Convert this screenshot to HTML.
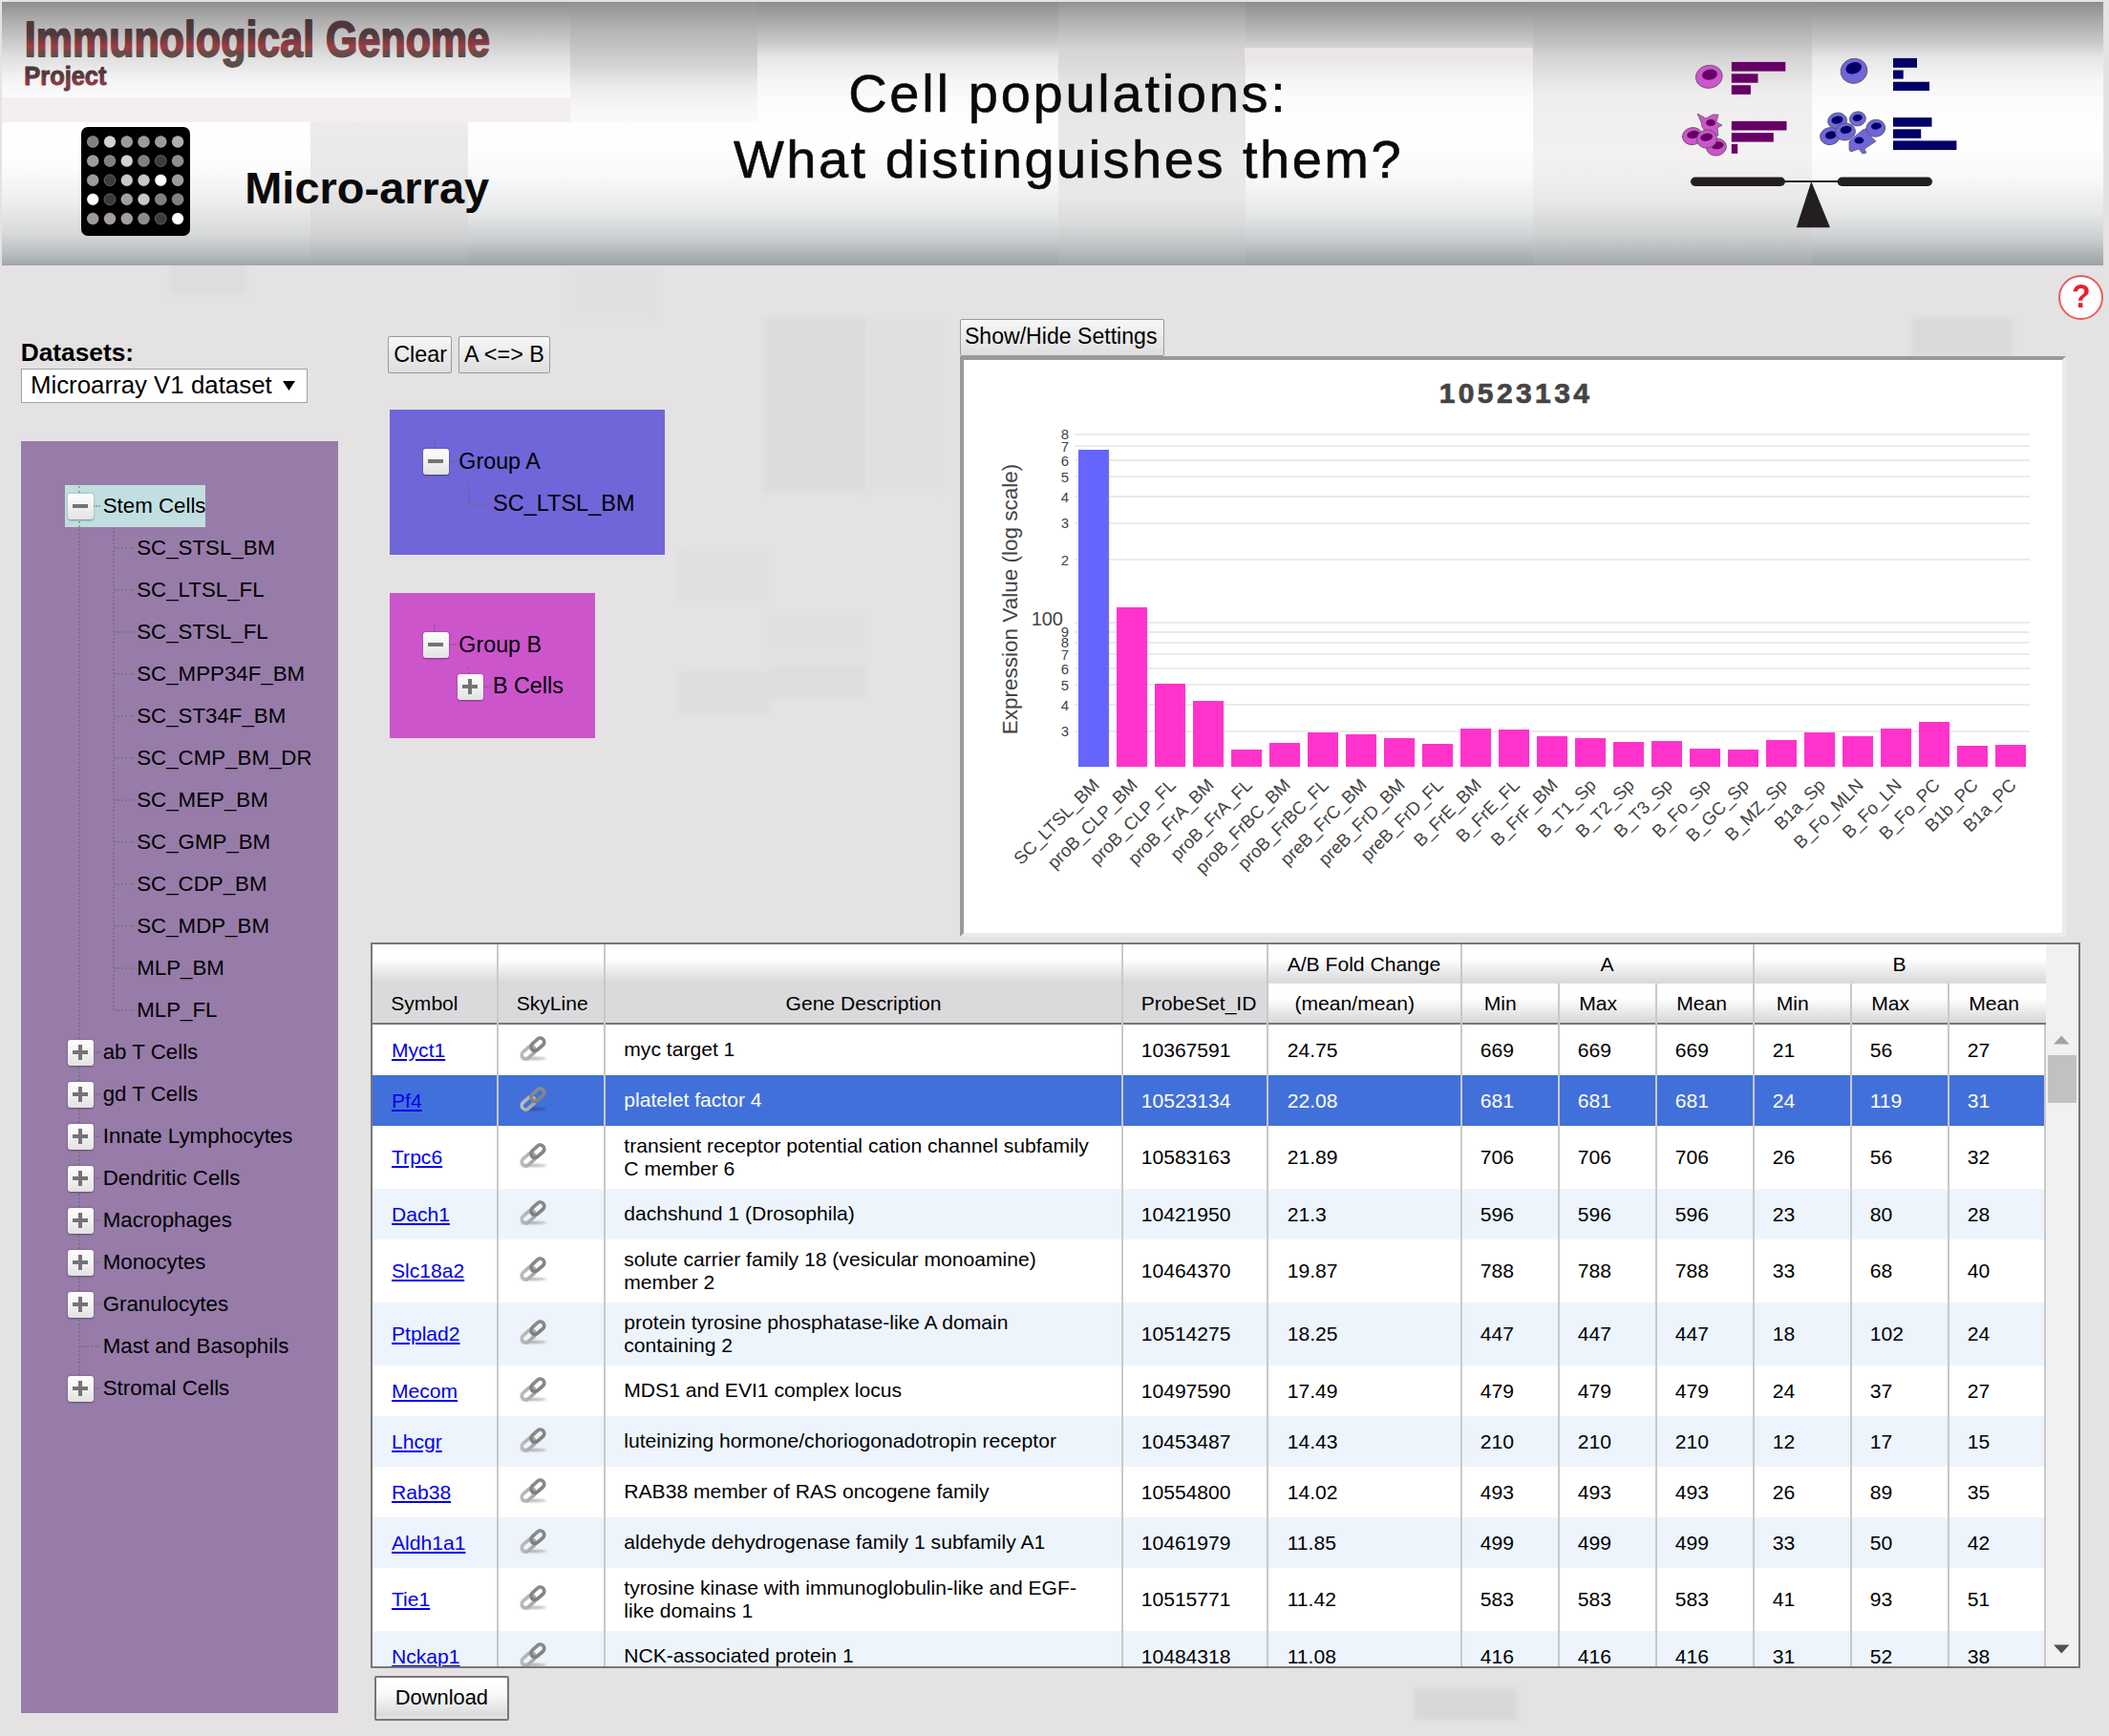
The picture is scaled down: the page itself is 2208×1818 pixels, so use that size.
<!DOCTYPE html>
<html><head><meta charset="utf-8">
<style>
*{box-sizing:border-box}
html,body{margin:0;padding:0}
body{width:2208px;height:1818px;position:relative;overflow:hidden;background:#e4e2e3;font-family:"Liberation Sans",sans-serif;color:#000}
.t{position:absolute;white-space:pre;line-height:1.117}
.abs{position:absolute}
.btn{position:absolute;border:1px solid #9a9a9a;border-radius:2px;background:linear-gradient(#f7f7f7,#dedede)}
.tog{position:absolute;width:27px;height:27px;border-radius:3px;background:linear-gradient(#fdfdfd 0%,#f3f3f3 45%,#e2e2e2 100%);box-shadow:0 0.5px 2px rgba(0,0,0,.4)}
.tog i{position:absolute;left:5.5px;top:11.5px;width:16px;height:4px;background:#747474}
.tog b{position:absolute;left:11.5px;top:5.5px;width:4px;height:16px;background:#747474}
.vd{position:absolute;width:0;border-left:2px dotted rgba(100,100,100,.45)}
.hd{position:absolute;height:0;border-top:2px dotted rgba(100,100,100,.45)}
</style></head><body>

<div class="abs" style="left:177px;top:278px;width:82px;height:30px;background:#dedddd;filter:blur(2px)"></div>
<div class="abs" style="left:597px;top:286px;width:94px;height:47px;background:#e1dfdf;filter:blur(2px)"></div>
<div class="abs" style="left:800px;top:333px;width:107px;height:182px;background:#dddcdc;filter:blur(2px)"></div>
<div class="abs" style="left:907px;top:333px;width:80px;height:182px;background:#e1e0e0;filter:blur(2px)"></div>
<div class="abs" style="left:710px;top:577px;width:94px;height:50px;background:#e0dfdf;filter:blur(2px)"></div>
<div class="abs" style="left:2001px;top:333px;width:107px;height:40px;background:#dbdada;filter:blur(2px)"></div>
<div class="abs" style="left:1481px;top:1768px;width:107px;height:34px;background:#d9d8d8;filter:blur(2px)"></div>
<div class="abs" style="left:710px;top:704px;width:94px;height:44px;background:#dfdede;filter:blur(2px)"></div>
<div class="abs" style="left:804px;top:644px;width:103px;height:40px;background:#e1e0e0;filter:blur(2px)"></div>
<div class="abs" style="left:804px;top:696px;width:103px;height:35px;background:#dfdede;filter:blur(2px)"></div>
<div class="abs" style="left:2px;top:2px;width:2200px;height:276px;overflow:hidden;background:linear-gradient(#8e8e8e 0%,#a9a9a9 7%,#c8c8c8 15%,#e6e6e6 21%,#f6f6f6 30%,#fdfdfd 40%,#ffffff 55%,#f6f7f7 68%,#e6e8e9 80%,#cbced0 90%,#a9aeb0 97%,#9da3a5 100%)">
<div class="abs" style="left:0;top:0;width:595px;height:100px;background:linear-gradient(#8f8f8f 0%,#b5b5b5 25%,#dcdcdc 55%,#f3f3f3 80%,#fbfbfb 100%)"></div>
<div class="abs" style="left:0;top:100px;width:595px;height:26px;background:#f3efef"></div>
<div class="abs" style="left:0;top:126px;width:323px;height:150px;background:linear-gradient(#ffffff 0%,#fdfdfd 30%,#eeeeee 55%,#d6d8d9 78%,#b9bdbf 92%,#a0a6a8 100%)"></div>
<div class="abs" style="left:323px;top:126px;width:165px;height:150px;background:linear-gradient(#ececec 0%,#e8e8e8 40%,#e0e0e0 60%,#cfd1d2 80%,#b5b9bb 92%,#9fa5a7 100%)"></div>
<div class="abs" style="left:1603px;top:0;width:292px;height:276px;background:linear-gradient(#8f8f8f 0%,#b0b0b0 10%,#d8d6d6 22%,#efedee 35%,#f3f1f2 60%,#e9e9ea 75%,#cfd1d2 88%,#a3a8aa 100%)"></div>
<div class="abs" style="left:595px;top:0;width:196px;height:126px;background:linear-gradient(#929292 0%,#b0b0b0 20%,#c6c6c6 40%,#d3d3d3 52%,#ebebeb 70%,#f7f7f7 88%,#fafafa 100%)"></div>
<div class="abs" style="left:1106px;top:0;width:196px;height:276px;background:linear-gradient(#959393 0%,#b7b5b4 8%,#d5d3d3 18%,#e3e1e1 30%,#e8e7e7 45%,#eaeaea 60%,#e7e8e8 74%,#d7d9da 85%,#bfc2c4 93%,#a0a5a7 100%)"></div>
<div class="abs" style="left:1301px;top:48px;width:302px;height:14px;background:#ebe6e6"></div>
</div>
<svg class="abs" style="left:0;top:0" width="720" height="110"><defs><linearGradient id="g1" gradientUnits="userSpaceOnUse" x1="0" y1="-38" x2="0" y2="1"><stop offset="0" stop-color="#4a3639"/><stop offset="0.38" stop-color="#52393c"/><stop offset="0.72" stop-color="#9e3d44"/><stop offset="0.86" stop-color="#6b4a48"/><stop offset="1" stop-color="#5b4f49"/></linearGradient><linearGradient id="g2" gradientUnits="userSpaceOnUse" x1="0" y1="-21.2" x2="0" y2="9.8"><stop offset="0" stop-color="#4a3639"/><stop offset="0.35" stop-color="#56393d"/><stop offset="0.62" stop-color="#8d3a41"/><stop offset="1" stop-color="#5a3a3e"/></linearGradient></defs><text transform="translate(25.8,59.4) scale(0.843,1)" font-family="Liberation Sans" font-weight="bold" font-size="51" fill="url(#g1)" stroke="url(#g1)" stroke-width="1.8" stroke-linejoin="round">Immunological Genome</text><text transform="translate(25.3,89.2) scale(0.918,1)" font-family="Liberation Sans" font-weight="bold" font-size="27.7" fill="url(#g2)" stroke="url(#g2)" stroke-width="1" stroke-linejoin="round">Project</text></svg>
<div class="abs" style="left:85px;top:133px;width:114px;height:114px;background:#000;border-radius:7px"></div>
<svg class="abs" style="left:0;top:0" width="260" height="260"><circle cx="97.2" cy="148.4" r="6" fill="rgb(128,128,128)" stroke="rgba(255,255,255,0.35)" stroke-width="0.8"/><circle cx="115.0" cy="148.4" r="6" fill="rgb(210,210,210)" stroke="rgba(255,255,255,0.35)" stroke-width="0.8"/><circle cx="132.8" cy="148.4" r="6" fill="rgb(155,155,155)" stroke="rgba(255,255,255,0.35)" stroke-width="0.8"/><circle cx="150.5" cy="148.4" r="6" fill="rgb(155,155,155)" stroke="rgba(255,255,255,0.35)" stroke-width="0.8"/><circle cx="168.3" cy="148.4" r="6" fill="rgb(155,155,155)" stroke="rgba(255,255,255,0.35)" stroke-width="0.8"/><circle cx="186.1" cy="148.4" r="6" fill="rgb(180,172,172)" stroke="rgba(255,255,255,0.35)" stroke-width="0.8"/><circle cx="97.2" cy="168.6" r="6" fill="rgb(155,155,155)" stroke="rgba(255,255,255,0.35)" stroke-width="0.8"/><circle cx="115.0" cy="168.6" r="6" fill="rgb(128,128,128)" stroke="rgba(255,255,255,0.35)" stroke-width="0.8"/><circle cx="132.8" cy="168.6" r="6" fill="rgb(210,210,210)" stroke="rgba(255,255,255,0.35)" stroke-width="0.8"/><circle cx="150.5" cy="168.6" r="6" fill="rgb(128,128,128)" stroke="rgba(255,255,255,0.35)" stroke-width="0.8"/><circle cx="168.3" cy="168.6" r="6" fill="rgb(60,60,60)" stroke="rgba(255,255,255,0.35)" stroke-width="0.8"/><circle cx="186.1" cy="168.6" r="6" fill="rgb(140,140,140)" stroke="rgba(255,255,255,0.35)" stroke-width="0.8"/><circle cx="97.2" cy="188.7" r="6" fill="rgb(155,155,155)" stroke="rgba(255,255,255,0.35)" stroke-width="0.8"/><circle cx="115.0" cy="188.7" r="6" fill="rgb(60,60,60)" stroke="rgba(255,255,255,0.35)" stroke-width="0.8"/><circle cx="132.8" cy="188.7" r="6" fill="rgb(200,200,200)" stroke="rgba(255,255,255,0.35)" stroke-width="0.8"/><circle cx="150.5" cy="188.7" r="6" fill="rgb(200,200,200)" stroke="rgba(255,255,255,0.35)" stroke-width="0.8"/><circle cx="168.3" cy="188.7" r="6" fill="rgb(255,255,255)" stroke="rgba(255,255,255,0.35)" stroke-width="0.8"/><circle cx="186.1" cy="188.7" r="6" fill="rgb(155,155,155)" stroke="rgba(255,255,255,0.35)" stroke-width="0.8"/><circle cx="97.2" cy="208.8" r="6" fill="rgb(255,255,255)" stroke="rgba(255,255,255,0.35)" stroke-width="0.8"/><circle cx="115.0" cy="208.8" r="6" fill="rgb(60,60,60)" stroke="rgba(255,255,255,0.35)" stroke-width="0.8"/><circle cx="132.8" cy="208.8" r="6" fill="rgb(165,157,157)" stroke="rgba(255,255,255,0.35)" stroke-width="0.8"/><circle cx="150.5" cy="208.8" r="6" fill="rgb(200,200,200)" stroke="rgba(255,255,255,0.35)" stroke-width="0.8"/><circle cx="168.3" cy="208.8" r="6" fill="rgb(128,128,128)" stroke="rgba(255,255,255,0.35)" stroke-width="0.8"/><circle cx="186.1" cy="208.8" r="6" fill="rgb(128,128,128)" stroke="rgba(255,255,255,0.35)" stroke-width="0.8"/><circle cx="97.2" cy="229.0" r="6" fill="rgb(155,155,155)" stroke="rgba(255,255,255,0.35)" stroke-width="0.8"/><circle cx="115.0" cy="229.0" r="6" fill="rgb(165,157,157)" stroke="rgba(255,255,255,0.35)" stroke-width="0.8"/><circle cx="132.8" cy="229.0" r="6" fill="rgb(165,157,157)" stroke="rgba(255,255,255,0.35)" stroke-width="0.8"/><circle cx="150.5" cy="229.0" r="6" fill="rgb(140,140,140)" stroke="rgba(255,255,255,0.35)" stroke-width="0.8"/><circle cx="168.3" cy="229.0" r="6" fill="rgb(60,60,60)" stroke="rgba(255,255,255,0.35)" stroke-width="0.8"/><circle cx="186.1" cy="229.0" r="6" fill="rgb(255,255,255)" stroke="rgba(255,255,255,0.35)" stroke-width="0.8"/></svg>
<div class="t" style="left:256.2px;top:171.06px;font-size:47px;font-weight:bold;color:#0a0a0a">Micro-array</div>
<div class="t" style="left:888.2px;top:66.92px;font-size:56px;color:#0a0a0a;letter-spacing:2.73px;-webkit-text-stroke:0.6px #0a0a0a">Cell populations:</div>
<div class="t" style="left:767.9px;top:135.92px;font-size:56px;color:#0a0a0a;letter-spacing:2.5px;-webkit-text-stroke:0.6px #0a0a0a">What distinguishes them?</div>
<svg class="abs" style="left:0;top:0" width="2208" height="280"><g transform="translate(1789.3,80.3) rotate(-10)"><ellipse rx="14" ry="12" fill="#cc55cc" stroke="#555" stroke-width="0.8"/><ellipse cx="1" cy="-2" rx="8" ry="5.5" fill="#660066"/></g><rect x="1812.8" y="64.9" width="56.5" height="9.7" fill="#660066"/><rect x="1812.8" y="77.3" width="27.7" height="9.4" fill="#660066"/><rect x="1812.8" y="89.2" width="20.1" height="9.7" fill="#660066"/><rect x="1812.8" y="126.9" width="57.7" height="9.6" fill="#660066"/><rect x="1812.8" y="139.1" width="44.0" height="9.5" fill="#660066"/><rect x="1812.8" y="150.9" width="6.4" height="9.9" fill="#660066"/><rect x="1982" y="60.9" width="25.0" height="9.9" fill="#000066"/><rect x="1982" y="73.5" width="10.7" height="9.1" fill="#000066"/><rect x="1982" y="85.7" width="38.0" height="9.3" fill="#000066"/><rect x="1982" y="123.1" width="40.5" height="9.6" fill="#000066"/><rect x="1982" y="135.3" width="29.2" height="9.5" fill="#000066"/><rect x="1982" y="147.4" width="66.4" height="9.6" fill="#000066"/><path d="M1777,119 L1786,124 L1793,120 L1799,120 L1797,128 L1803,131 L1798,134 L1799,142 L1794,142 L1787,140 L1782,133 L1781,128 Z" fill="#cc55cc" stroke="#555" stroke-width="0.7"/><ellipse cx="1791" cy="128.5" rx="5" ry="3.5" fill="#660066"/><g transform="translate(1771.9,142.6) rotate(-10)"><ellipse rx="10.5" ry="9" fill="#cc55cc" stroke="#555" stroke-width="0.8"/><ellipse cx="1" cy="-1.5" rx="6.5" ry="4" fill="#660066"/></g><g transform="translate(1796.9,154) rotate(-10)"><ellipse rx="10.5" ry="9" fill="#cc55cc" stroke="#555" stroke-width="0.8"/><ellipse cx="1.5" cy="-1.5" rx="6.5" ry="4" fill="#660066"/></g><g transform="translate(1787,145.6) rotate(-10)"><ellipse rx="10.5" ry="9.5" fill="#cc55cc" stroke="#555" stroke-width="0.8"/><ellipse cx="0" cy="-2" rx="6.5" ry="4" fill="#660066"/></g><g transform="translate(1941,74.3) rotate(-15)"><ellipse rx="14" ry="13" fill="#7066d9" stroke="#555" stroke-width="0.8"/><ellipse cx="0.5" cy="-3" rx="8.5" ry="6" fill="#000066"/></g><path d="M1936,148 L1950,136 L1956,134 L1958,142 L1964,148 L1952,156 L1954,160 L1950,161 L1946,156 L1938,159 L1936,157 Z" fill="#7066d9" stroke="#555" stroke-width="0.7"/><ellipse cx="1946.4" cy="147.1" rx="5" ry="3.5" fill="#000066"/><g transform="translate(1923.6,126.6) rotate(-10)"><ellipse rx="10" ry="8.5" fill="#7066d9" stroke="#555" stroke-width="0.8"/><ellipse cx="0" cy="-1" rx="6" ry="4" fill="#000066"/></g><g transform="translate(1944.9,124.4) rotate(-10)"><ellipse rx="8.5" ry="7.5" fill="#7066d9" stroke="#555" stroke-width="0.8"/><ellipse cx="0" cy="-1" rx="5" ry="3.5" fill="#000066"/></g><g transform="translate(1916,142.6) rotate(-10)"><ellipse rx="10.5" ry="9" fill="#7066d9" stroke="#555" stroke-width="0.8"/><ellipse cx="1" cy="-1" rx="6" ry="4" fill="#000066"/></g><g transform="translate(1963.8,134.2) rotate(-10)"><ellipse rx="10" ry="9" fill="#7066d9" stroke="#555" stroke-width="0.8"/><ellipse cx="1" cy="-2" rx="5.5" ry="3.5" fill="#000066"/></g><g transform="translate(1932,138) rotate(-10)"><ellipse rx="10.5" ry="9" fill="#7066d9" stroke="#555" stroke-width="0.8"/><ellipse cx="1" cy="-2" rx="6" ry="4" fill="#000066"/></g><rect x="1770" y="185.5" width="99" height="9.5" rx="4.75" fill="#231f20"/><rect x="1923.6" y="185.5" width="99.4" height="9.5" rx="4.75" fill="#231f20"/><rect x="1868" y="189" width="57" height="2" fill="#231f20"/><path d="M1896.3,190 L1916,238.2 L1880.8,238.2 Z" fill="#231f20"/></svg>
<div class="abs" style="left:2154.5px;top:287.5px;width:47px;height:47px;border-radius:50%;background:#fff;border:2.5px solid #eb5a5f"></div>
<div class="t" style="left:2168.6px;top:290.67px;font-size:35.5px;font-weight:bold;color:#e8202a;transform:scaleX(0.9);transform-origin:0 0">?</div>
<div class="t" style="left:21.7px;top:355.00px;font-size:26.3px;font-weight:bold">Datasets:</div>
<div class="abs" style="left:22px;top:386px;width:300px;height:36px;background:#fff;border:1px solid #a3a3a3"></div>
<div class="t" style="left:31.9px;top:389.41px;font-size:25.85px;">Microarray V1 dataset</div>
<svg class="abs" style="left:296px;top:399px" width="13" height="10"><path d="M0,0 L13,0 L6.5,10 Z" fill="#000"/></svg>
<div class="abs" style="left:22px;top:462px;width:332px;height:1332px;background:#977ca9"></div>
<div class="abs" style="left:68px;top:508px;width:147px;height:44px;background:#c1dfe0"></div>
<div class="vd" style="left:82px;top:509px;height:947px"></div>
<div class="vd" style="left:118px;top:553px;height:505px"></div>
<div class="hd" style="left:120px;top:573px;width:20px"></div>
<div class="hd" style="left:120px;top:617px;width:20px"></div>
<div class="hd" style="left:120px;top:661px;width:20px"></div>
<div class="hd" style="left:120px;top:705px;width:20px"></div>
<div class="hd" style="left:120px;top:749px;width:20px"></div>
<div class="hd" style="left:120px;top:793px;width:20px"></div>
<div class="hd" style="left:120px;top:837px;width:20px"></div>
<div class="hd" style="left:120px;top:881px;width:20px"></div>
<div class="hd" style="left:120px;top:925px;width:20px"></div>
<div class="hd" style="left:120px;top:969px;width:20px"></div>
<div class="hd" style="left:120px;top:1013px;width:20px"></div>
<div class="hd" style="left:120px;top:1057px;width:20px"></div>
<div class="hd" style="left:97px;top:529px;width:8px"></div>
<div class="hd" style="left:97px;top:1101px;width:8px"></div>
<div class="hd" style="left:97px;top:1145px;width:8px"></div>
<div class="hd" style="left:97px;top:1189px;width:8px"></div>
<div class="hd" style="left:97px;top:1233px;width:8px"></div>
<div class="hd" style="left:97px;top:1277px;width:8px"></div>
<div class="hd" style="left:97px;top:1321px;width:8px"></div>
<div class="hd" style="left:97px;top:1365px;width:8px"></div>
<div class="hd" style="left:84px;top:1409px;width:20px"></div>
<div class="hd" style="left:97px;top:1453px;width:8px"></div>
<div class="tog" style="left:70.5px;top:516.5px"><i></i></div>
<div class="t" style="left:107.7px;top:518.32px;font-size:22.3px;">Stem Cells</div>
<div class="t" style="left:143.2px;top:562.32px;font-size:22.3px;">SC_STSL_BM</div>
<div class="t" style="left:143.2px;top:606.32px;font-size:22.3px;">SC_LTSL_FL</div>
<div class="t" style="left:143.2px;top:650.32px;font-size:22.3px;">SC_STSL_FL</div>
<div class="t" style="left:143.2px;top:694.32px;font-size:22.3px;">SC_MPP34F_BM</div>
<div class="t" style="left:143.2px;top:738.32px;font-size:22.3px;">SC_ST34F_BM</div>
<div class="t" style="left:143.2px;top:782.32px;font-size:22.3px;">SC_CMP_BM_DR</div>
<div class="t" style="left:143.2px;top:826.32px;font-size:22.3px;">SC_MEP_BM</div>
<div class="t" style="left:143.2px;top:870.32px;font-size:22.3px;">SC_GMP_BM</div>
<div class="t" style="left:143.2px;top:914.32px;font-size:22.3px;">SC_CDP_BM</div>
<div class="t" style="left:143.2px;top:958.32px;font-size:22.3px;">SC_MDP_BM</div>
<div class="t" style="left:143.2px;top:1002.32px;font-size:22.3px;">MLP_BM</div>
<div class="t" style="left:143.2px;top:1046.32px;font-size:22.3px;">MLP_FL</div>
<div class="tog" style="left:70.5px;top:1088.5px"><i></i><b></b></div>
<div class="t" style="left:107.7px;top:1090.32px;font-size:22.3px;">ab T Cells</div>
<div class="tog" style="left:70.5px;top:1132.5px"><i></i><b></b></div>
<div class="t" style="left:107.7px;top:1134.32px;font-size:22.3px;">gd T Cells</div>
<div class="tog" style="left:70.5px;top:1176.5px"><i></i><b></b></div>
<div class="t" style="left:107.7px;top:1178.32px;font-size:22.3px;">Innate Lymphocytes</div>
<div class="tog" style="left:70.5px;top:1220.5px"><i></i><b></b></div>
<div class="t" style="left:107.7px;top:1222.32px;font-size:22.3px;">Dendritic Cells</div>
<div class="tog" style="left:70.5px;top:1264.5px"><i></i><b></b></div>
<div class="t" style="left:107.7px;top:1266.32px;font-size:22.3px;">Macrophages</div>
<div class="tog" style="left:70.5px;top:1308.5px"><i></i><b></b></div>
<div class="t" style="left:107.7px;top:1310.32px;font-size:22.3px;">Monocytes</div>
<div class="tog" style="left:70.5px;top:1352.5px"><i></i><b></b></div>
<div class="t" style="left:107.7px;top:1354.32px;font-size:22.3px;">Granulocytes</div>
<div class="t" style="left:107.7px;top:1398.32px;font-size:22.3px;">Mast and Basophils</div>
<div class="tog" style="left:70.5px;top:1440.5px"><i></i><b></b></div>
<div class="t" style="left:107.7px;top:1442.32px;font-size:22.3px;">Stromal Cells</div>
<div class="btn" style="left:406px;top:352px;width:67px;height:39px"></div>
<div class="t" style="left:412.2px;top:357.82px;font-size:23.4px;">Clear</div>
<div class="btn" style="left:480px;top:352px;width:96px;height:39px"></div>
<div class="t" style="left:486.0px;top:357.82px;font-size:23.4px;">A &lt;=&gt; B</div>
<div class="btn" style="left:1005px;top:334px;width:214px;height:39px"></div>
<div class="t" style="left:1009.9px;top:340.09px;font-size:23.1px;">Show/Hide Settings</div>
<div class="abs" style="left:408px;top:429px;width:288px;height:152px;background:#7066d9"></div>
<div class="vd" style="left:454px;top:461px;height:8px"></div>
<div class="tog" style="left:442.5px;top:469.5px;width:27px;height:27px"><i style="left:5.5px;top:11.5px"></i></div>
<div class="hd" style="left:470px;top:482px;width:8px"></div>
<div class="t" style="left:480.3px;top:470.41px;font-size:23.3px;">Group A</div>
<div class="vd" style="left:489.5px;top:507px;height:21px"></div>
<div class="hd" style="left:491px;top:527px;width:21px"></div>
<div class="t" style="left:516.0px;top:513.73px;font-size:23.5px;">SC_LTSL_BM</div>
<div class="abs" style="left:408px;top:621px;width:215px;height:152px;background:#cc55cc"></div>
<div class="vd" style="left:454px;top:654px;height:8px"></div>
<div class="tog" style="left:442.5px;top:661.5px;width:27px;height:27px"><i style="left:5.5px;top:11.5px"></i></div>
<div class="hd" style="left:470px;top:674px;width:8px"></div>
<div class="t" style="left:480.3px;top:661.91px;font-size:23.3px;">Group B</div>
<div class="vd" style="left:490px;top:699px;height:7px"></div>
<div class="tog" style="left:478.5px;top:705.5px;width:27px;height:27px"><i style="left:5.5px;top:11.5px"></i><b style="left:11.5px;top:5.5px"></b></div>
<div class="hd" style="left:506px;top:718px;width:8px"></div>
<div class="t" style="left:516.0px;top:705.41px;font-size:23.3px;">B Cells</div>
<div class="abs" style="left:1005px;top:373px;width:1158px;height:608px;background:#fff;border-style:solid;border-width:4px;border-color:#999 #ebebeb #ebebeb #999"></div>
<div class="t" style="left:1387px;top:395px;width:400px;text-align:center;font-size:30px;font-weight:bold;color:#444;letter-spacing:3.4px;-webkit-text-stroke:0.7px #444">10523134</div>
<div class="abs" style="left:1125px;top:453.6px;width:1000px;height:2px;background:#ebebeb"></div>
<div class="abs" style="left:1125px;top:466.3px;width:1000px;height:2px;background:#ebebeb"></div>
<div class="abs" style="left:1125px;top:480.9px;width:1000px;height:2px;background:#ebebeb"></div>
<div class="abs" style="left:1125px;top:498.1px;width:1000px;height:2px;background:#ebebeb"></div>
<div class="abs" style="left:1125px;top:519.3px;width:1000px;height:2px;background:#ebebeb"></div>
<div class="abs" style="left:1125px;top:546.5px;width:1000px;height:2px;background:#ebebeb"></div>
<div class="abs" style="left:1125px;top:584.9px;width:1000px;height:2px;background:#ebebeb"></div>
<div class="abs" style="left:1125px;top:650.5px;width:1000px;height:2px;background:#ebebeb"></div>
<div class="abs" style="left:1125px;top:660.5px;width:1000px;height:2px;background:#ebebeb"></div>
<div class="abs" style="left:1125px;top:671.6px;width:1000px;height:2px;background:#ebebeb"></div>
<div class="abs" style="left:1125px;top:684.3px;width:1000px;height:2px;background:#ebebeb"></div>
<div class="abs" style="left:1125px;top:698.9px;width:1000px;height:2px;background:#ebebeb"></div>
<div class="abs" style="left:1125px;top:716.1px;width:1000px;height:2px;background:#ebebeb"></div>
<div class="abs" style="left:1125px;top:737.3px;width:1000px;height:2px;background:#ebebeb"></div>
<div class="abs" style="left:1125px;top:764.5px;width:1000px;height:2px;background:#ebebeb"></div>
<div class="t" style="left:1018px;top:447.2px;width:101px;text-align:right;font-size:15px;color:#444">8</div>
<div class="t" style="left:1018px;top:459.9px;width:101px;text-align:right;font-size:15px;color:#444">7</div>
<div class="t" style="left:1018px;top:474.5px;width:101px;text-align:right;font-size:15px;color:#444">6</div>
<div class="t" style="left:1018px;top:491.7px;width:101px;text-align:right;font-size:15px;color:#444">5</div>
<div class="t" style="left:1018px;top:512.9px;width:101px;text-align:right;font-size:15px;color:#444">4</div>
<div class="t" style="left:1018px;top:540.1px;width:101px;text-align:right;font-size:15px;color:#444">3</div>
<div class="t" style="left:1018px;top:578.5px;width:101px;text-align:right;font-size:15px;color:#444">2</div>
<div class="t" style="left:1013px;top:636.9px;width:100px;text-align:right;font-size:20px;color:#444">100</div>
<div class="t" style="left:1018px;top:654.1px;width:101px;text-align:right;font-size:15px;color:#444">9</div>
<div class="t" style="left:1018px;top:665.2px;width:101px;text-align:right;font-size:15px;color:#444">8</div>
<div class="t" style="left:1018px;top:677.9px;width:101px;text-align:right;font-size:15px;color:#444">7</div>
<div class="t" style="left:1018px;top:692.5px;width:101px;text-align:right;font-size:15px;color:#444">6</div>
<div class="t" style="left:1018px;top:709.7px;width:101px;text-align:right;font-size:15px;color:#444">5</div>
<div class="t" style="left:1018px;top:730.9px;width:101px;text-align:right;font-size:15px;color:#444">4</div>
<div class="t" style="left:1018px;top:758.1px;width:101px;text-align:right;font-size:15px;color:#444">3</div>
<div class="abs" style="left:1129.2px;top:471px;width:32px;height:332px;background:#6666ff"></div>
<div class="abs" style="left:1169.2px;top:636px;width:32px;height:167px;background:#ff33cc"></div>
<div class="abs" style="left:1209.2px;top:716px;width:32px;height:87px;background:#ff33cc"></div>
<div class="abs" style="left:1249.2px;top:734px;width:32px;height:69px;background:#ff33cc"></div>
<div class="abs" style="left:1289.2px;top:785px;width:32px;height:18px;background:#ff33cc"></div>
<div class="abs" style="left:1329.2px;top:778px;width:32px;height:25px;background:#ff33cc"></div>
<div class="abs" style="left:1369.2px;top:767px;width:32px;height:36px;background:#ff33cc"></div>
<div class="abs" style="left:1409.2px;top:769px;width:32px;height:34px;background:#ff33cc"></div>
<div class="abs" style="left:1449.2px;top:773px;width:32px;height:30px;background:#ff33cc"></div>
<div class="abs" style="left:1489.2px;top:779px;width:32px;height:24px;background:#ff33cc"></div>
<div class="abs" style="left:1529.2px;top:763px;width:32px;height:40px;background:#ff33cc"></div>
<div class="abs" style="left:1569.2px;top:764px;width:32px;height:39px;background:#ff33cc"></div>
<div class="abs" style="left:1609.2px;top:771px;width:32px;height:32px;background:#ff33cc"></div>
<div class="abs" style="left:1649.2px;top:773px;width:32px;height:30px;background:#ff33cc"></div>
<div class="abs" style="left:1689.2px;top:777px;width:32px;height:26px;background:#ff33cc"></div>
<div class="abs" style="left:1729.2px;top:776px;width:32px;height:27px;background:#ff33cc"></div>
<div class="abs" style="left:1769.2px;top:784px;width:32px;height:19px;background:#ff33cc"></div>
<div class="abs" style="left:1809.2px;top:785px;width:32px;height:18px;background:#ff33cc"></div>
<div class="abs" style="left:1849.2px;top:775px;width:32px;height:28px;background:#ff33cc"></div>
<div class="abs" style="left:1889.2px;top:767px;width:32px;height:36px;background:#ff33cc"></div>
<div class="abs" style="left:1929.2px;top:771px;width:32px;height:32px;background:#ff33cc"></div>
<div class="abs" style="left:1969.2px;top:763px;width:32px;height:40px;background:#ff33cc"></div>
<div class="abs" style="left:2009.2px;top:756px;width:32px;height:47px;background:#ff33cc"></div>
<div class="abs" style="left:2049.2px;top:781px;width:32px;height:22px;background:#ff33cc"></div>
<div class="abs" style="left:2089.2px;top:780px;width:32px;height:23px;background:#ff33cc"></div>
<div class="t" style="left:747.6px;top:809.1px;width:400px;text-align:right;font-size:18.6px;color:#444;transform:rotate(-45deg);transform-origin:100% 50%">SC_LTSL_BM</div>
<div class="t" style="left:787.6px;top:809.1px;width:400px;text-align:right;font-size:18.6px;color:#444;transform:rotate(-45deg);transform-origin:100% 50%">proB_CLP_BM</div>
<div class="t" style="left:827.6px;top:809.1px;width:400px;text-align:right;font-size:18.6px;color:#444;transform:rotate(-45deg);transform-origin:100% 50%">proB_CLP_FL</div>
<div class="t" style="left:867.6px;top:809.1px;width:400px;text-align:right;font-size:18.6px;color:#444;transform:rotate(-45deg);transform-origin:100% 50%">proB_FrA_BM</div>
<div class="t" style="left:907.6px;top:809.1px;width:400px;text-align:right;font-size:18.6px;color:#444;transform:rotate(-45deg);transform-origin:100% 50%">proB_FrA_FL</div>
<div class="t" style="left:947.6px;top:809.1px;width:400px;text-align:right;font-size:18.6px;color:#444;transform:rotate(-45deg);transform-origin:100% 50%">proB_FrBC_BM</div>
<div class="t" style="left:987.6px;top:809.1px;width:400px;text-align:right;font-size:18.6px;color:#444;transform:rotate(-45deg);transform-origin:100% 50%">proB_FrBC_FL</div>
<div class="t" style="left:1027.6px;top:809.1px;width:400px;text-align:right;font-size:18.6px;color:#444;transform:rotate(-45deg);transform-origin:100% 50%">preB_FrC_BM</div>
<div class="t" style="left:1067.6px;top:809.1px;width:400px;text-align:right;font-size:18.6px;color:#444;transform:rotate(-45deg);transform-origin:100% 50%">preB_FrD_BM</div>
<div class="t" style="left:1107.6px;top:809.1px;width:400px;text-align:right;font-size:18.6px;color:#444;transform:rotate(-45deg);transform-origin:100% 50%">preB_FrD_FL</div>
<div class="t" style="left:1147.6px;top:809.1px;width:400px;text-align:right;font-size:18.6px;color:#444;transform:rotate(-45deg);transform-origin:100% 50%">B_FrE_BM</div>
<div class="t" style="left:1187.6px;top:809.1px;width:400px;text-align:right;font-size:18.6px;color:#444;transform:rotate(-45deg);transform-origin:100% 50%">B_FrE_FL</div>
<div class="t" style="left:1227.6px;top:809.1px;width:400px;text-align:right;font-size:18.6px;color:#444;transform:rotate(-45deg);transform-origin:100% 50%">B_FrF_BM</div>
<div class="t" style="left:1267.6px;top:809.1px;width:400px;text-align:right;font-size:18.6px;color:#444;transform:rotate(-45deg);transform-origin:100% 50%">B_T1_Sp</div>
<div class="t" style="left:1307.6px;top:809.1px;width:400px;text-align:right;font-size:18.6px;color:#444;transform:rotate(-45deg);transform-origin:100% 50%">B_T2_Sp</div>
<div class="t" style="left:1347.6px;top:809.1px;width:400px;text-align:right;font-size:18.6px;color:#444;transform:rotate(-45deg);transform-origin:100% 50%">B_T3_Sp</div>
<div class="t" style="left:1387.6px;top:809.1px;width:400px;text-align:right;font-size:18.6px;color:#444;transform:rotate(-45deg);transform-origin:100% 50%">B_Fo_Sp</div>
<div class="t" style="left:1427.6px;top:809.1px;width:400px;text-align:right;font-size:18.6px;color:#444;transform:rotate(-45deg);transform-origin:100% 50%">B_GC_Sp</div>
<div class="t" style="left:1467.6px;top:809.1px;width:400px;text-align:right;font-size:18.6px;color:#444;transform:rotate(-45deg);transform-origin:100% 50%">B_MZ_Sp</div>
<div class="t" style="left:1507.6px;top:809.1px;width:400px;text-align:right;font-size:18.6px;color:#444;transform:rotate(-45deg);transform-origin:100% 50%">B1a_Sp</div>
<div class="t" style="left:1547.6px;top:809.1px;width:400px;text-align:right;font-size:18.6px;color:#444;transform:rotate(-45deg);transform-origin:100% 50%">B_Fo_MLN</div>
<div class="t" style="left:1587.6px;top:809.1px;width:400px;text-align:right;font-size:18.6px;color:#444;transform:rotate(-45deg);transform-origin:100% 50%">B_Fo_LN</div>
<div class="t" style="left:1627.6px;top:809.1px;width:400px;text-align:right;font-size:18.6px;color:#444;transform:rotate(-45deg);transform-origin:100% 50%">B_Fo_PC</div>
<div class="t" style="left:1667.6px;top:809.1px;width:400px;text-align:right;font-size:18.6px;color:#444;transform:rotate(-45deg);transform-origin:100% 50%">B1b_PC</div>
<div class="t" style="left:1707.6px;top:809.1px;width:400px;text-align:right;font-size:18.6px;color:#444;transform:rotate(-45deg);transform-origin:100% 50%">B1a_PC</div>
<div class="t" style="left:857px;top:615.2px;width:400px;text-align:center;font-size:22.5px;color:#444;transform:rotate(-90deg);transform-origin:200px 12.5px">Expression Value (log scale)</div>
<div class="abs" style="left:388px;top:987px;width:1790px;height:760px;background:#fff"></div>
<div class="abs" style="left:2142px;top:989px;width:34px;height:756px;background:#f1f1f1"></div>
<svg class="abs" style="left:2150px;top:1084px" width="17" height="10"><path d="M0,9.5 L16.5,9.5 L8.25,0.5 Z" fill="#a3a3a3"/></svg>
<div class="abs" style="left:2144px;top:1105px;width:30px;height:50px;background:#c1c1c1"></div>
<svg class="abs" style="left:2150px;top:1722px" width="17" height="10"><path d="M0,0.5 L16.5,0.5 L8.25,9.5 Z" fill="#505050"/></svg>
<div class="abs" style="left:390px;top:989px;width:1752px;height:82px;background:linear-gradient(#ffffff 0px,#ffffff 15px,#eeeeef 26px,#dadadc 39px,#dadadc 100%)"></div>
<div class="abs" style="left:1328px;top:1030px;width:814px;height:41px;background:linear-gradient(#ffffff 0px,#ffffff 15px,#eeeeef 26px,#dadadc 39px,#dadadc 100%)"></div>
<div class="abs" style="left:390px;top:1071px;width:1752px;height:2px;background:#777"></div>
<div class="abs" style="left:0;top:0;width:2208px;height:1745px;overflow:hidden">
<div class="abs" style="left:390px;top:1073px;width:1752px;height:53px;background:#ffffff"></div>
<div class="abs" style="left:390px;top:1126px;width:1752px;height:53px;background:#4270da"></div>
<div class="abs" style="left:390px;top:1179px;width:1752px;height:66px;background:#ffffff"></div>
<div class="abs" style="left:390px;top:1245px;width:1752px;height:53px;background:#edf4fc"></div>
<div class="abs" style="left:390px;top:1298px;width:1752px;height:66px;background:#ffffff"></div>
<div class="abs" style="left:390px;top:1364px;width:1752px;height:66px;background:#edf4fc"></div>
<div class="abs" style="left:390px;top:1430px;width:1752px;height:53px;background:#ffffff"></div>
<div class="abs" style="left:390px;top:1483px;width:1752px;height:53px;background:#edf4fc"></div>
<div class="abs" style="left:390px;top:1536px;width:1752px;height:53px;background:#ffffff"></div>
<div class="abs" style="left:390px;top:1589px;width:1752px;height:53px;background:#edf4fc"></div>
<div class="abs" style="left:390px;top:1642px;width:1752px;height:66px;background:#ffffff"></div>
<div class="abs" style="left:390px;top:1708px;width:1752px;height:37px;background:#edf4fc"></div>
<div class="abs" style="left:520px;top:989px;width:2px;height:756px;background:#c9c9c9"></div>
<div class="abs" style="left:632px;top:989px;width:2px;height:756px;background:#c9c9c9"></div>
<div class="abs" style="left:1174px;top:989px;width:2px;height:756px;background:#c9c9c9"></div>
<div class="abs" style="left:1326px;top:989px;width:2px;height:756px;background:#c9c9c9"></div>
<div class="abs" style="left:1528.5px;top:989px;width:2px;height:756px;background:#c9c9c9"></div>
<div class="abs" style="left:1630.5px;top:1030px;width:2px;height:715px;background:#c9c9c9"></div>
<div class="abs" style="left:1732.5px;top:1030px;width:2px;height:715px;background:#c9c9c9"></div>
<div class="abs" style="left:1834.5px;top:989px;width:2px;height:756px;background:#c9c9c9"></div>
<div class="abs" style="left:1936.5px;top:1030px;width:2px;height:715px;background:#c9c9c9"></div>
<div class="abs" style="left:2038.5px;top:1030px;width:2px;height:715px;background:#c9c9c9"></div>
<div class="abs" style="left:2140px;top:1073px;width:2px;height:672px;background:#c9c9c9"></div>
<div class="t" style="left:409.2px;top:1038.70px;font-size:21.1px;">Symbol</div>
<div class="t" style="left:540.7px;top:1038.70px;font-size:21.1px;">SkyLine</div>
<div class="t" style="left:634px;top:1038.70px;width:540px;text-align:center;font-size:21.1px">Gene Description</div>
<div class="t" style="left:1194.7px;top:1038.70px;font-size:21.1px;">ProbeSet_ID</div>
<div class="t" style="left:1328px;top:998.30px;width:200px;text-align:center;font-size:21.1px">A/B Fold Change</div>
<div class="t" style="left:1355.5px;top:1038.70px;font-size:21.1px;">(mean/mean)</div>
<div class="t" style="left:1530px;top:998.30px;width:305px;text-align:center;font-size:21.1px">A</div>
<div class="t" style="left:1836px;top:998.30px;width:305px;text-align:center;font-size:21.1px">B</div>
<div class="t" style="left:1553.8px;top:1038.70px;font-size:21.1px;">Min</div>
<div class="t" style="left:1653.2px;top:1038.70px;font-size:21.1px;">Max</div>
<div class="t" style="left:1755.2px;top:1038.70px;font-size:21.1px;">Mean</div>
<div class="t" style="left:1859.8px;top:1038.70px;font-size:21.1px;">Min</div>
<div class="t" style="left:1959.2px;top:1038.70px;font-size:21.1px;">Max</div>
<div class="t" style="left:2061.2px;top:1038.70px;font-size:21.1px;">Mean</div>
<svg width="0" height="0" style="position:absolute"><defs><filter id="bl" x="-50%" y="-200%" width="200%" height="500%"><feGaussianBlur stdDeviation="0.8"/></filter><linearGradient id="lg1" x1="0" y1="0" x2="1" y2="1"><stop offset="0" stop-color="#bdbdbd"/><stop offset="1" stop-color="#a5a5a5"/></linearGradient><linearGradient id="lg2" x1="0" y1="1" x2="1" y2="0"><stop offset="0" stop-color="#7e7e7e"/><stop offset="1" stop-color="#8c8c8c"/></linearGradient></defs></svg>
<div class="t" style="left:410.0px;top:1087.72px;font-size:21.1px;color:#0000ee;text-decoration:underline">Myct1</div>
<svg class="abs" style="left:541px;top:1083.5px" width="34" height="30" viewBox="0 0 34 30"><ellipse cx="17.5" cy="24.5" rx="13.5" ry="1.4" fill="rgba(0,0,0,0.3)" filter="url(#bl)"/><g transform="rotate(-42 17 14)"><rect x="2.6" y="9.8" width="15.8" height="8.4" rx="4.2" fill="none" stroke="url(#lg1)" stroke-width="3.7"/><rect x="15.6" y="9.8" width="15.8" height="8.4" rx="4.2" fill="none" stroke="url(#lg2)" stroke-width="3.7"/></g></svg>
<div class="t" style="left:653.3px;top:1087.35px;font-size:21.1px;line-height:24.3px;color:#000">myc target 1</div>
<div class="t" style="left:1194.7px;top:1087.72px;font-size:21.1px;color:#000">10367591</div>
<div class="t" style="left:1347.7px;top:1087.72px;font-size:21.1px;color:#000">24.75</div>
<div class="t" style="left:1549.7px;top:1087.72px;font-size:21.1px;color:#000">669</div>
<div class="t" style="left:1651.7px;top:1087.72px;font-size:21.1px;color:#000">669</div>
<div class="t" style="left:1753.7px;top:1087.72px;font-size:21.1px;color:#000">669</div>
<div class="t" style="left:1855.7px;top:1087.72px;font-size:21.1px;color:#000">21</div>
<div class="t" style="left:1957.7px;top:1087.72px;font-size:21.1px;color:#000">56</div>
<div class="t" style="left:2059.7px;top:1087.72px;font-size:21.1px;color:#000">27</div>
<div class="t" style="left:410.0px;top:1140.72px;font-size:21.1px;color:#0000ee;text-decoration:underline">Pf4</div>
<svg class="abs" style="left:541px;top:1136.5px" width="34" height="30" viewBox="0 0 34 30"><ellipse cx="17.5" cy="24.5" rx="13.5" ry="1.4" fill="rgba(0,0,0,0.3)" filter="url(#bl)"/><g transform="rotate(-42 17 14)"><rect x="2.6" y="9.8" width="15.8" height="8.4" rx="4.2" fill="none" stroke="url(#lg1)" stroke-width="3.7"/><rect x="15.6" y="9.8" width="15.8" height="8.4" rx="4.2" fill="none" stroke="url(#lg2)" stroke-width="3.7"/></g></svg>
<div class="t" style="left:653.3px;top:1140.35px;font-size:21.1px;line-height:24.3px;color:#fff">platelet factor 4</div>
<div class="t" style="left:1194.7px;top:1140.72px;font-size:21.1px;color:#fff">10523134</div>
<div class="t" style="left:1347.7px;top:1140.72px;font-size:21.1px;color:#fff">22.08</div>
<div class="t" style="left:1549.7px;top:1140.72px;font-size:21.1px;color:#fff">681</div>
<div class="t" style="left:1651.7px;top:1140.72px;font-size:21.1px;color:#fff">681</div>
<div class="t" style="left:1753.7px;top:1140.72px;font-size:21.1px;color:#fff">681</div>
<div class="t" style="left:1855.7px;top:1140.72px;font-size:21.1px;color:#fff">24</div>
<div class="t" style="left:1957.7px;top:1140.72px;font-size:21.1px;color:#fff">119</div>
<div class="t" style="left:2059.7px;top:1140.72px;font-size:21.1px;color:#fff">31</div>
<div class="t" style="left:410.0px;top:1200.22px;font-size:21.1px;color:#0000ee;text-decoration:underline">Trpc6</div>
<svg class="abs" style="left:541px;top:1196.0px" width="34" height="30" viewBox="0 0 34 30"><ellipse cx="17.5" cy="24.5" rx="13.5" ry="1.4" fill="rgba(0,0,0,0.3)" filter="url(#bl)"/><g transform="rotate(-42 17 14)"><rect x="2.6" y="9.8" width="15.8" height="8.4" rx="4.2" fill="none" stroke="url(#lg1)" stroke-width="3.7"/><rect x="15.6" y="9.8" width="15.8" height="8.4" rx="4.2" fill="none" stroke="url(#lg2)" stroke-width="3.7"/></g></svg>
<div class="t" style="left:653.3px;top:1187.70px;font-size:21.1px;line-height:24.3px;color:#000">transient receptor potential cation channel subfamily
C member 6</div>
<div class="t" style="left:1194.7px;top:1200.22px;font-size:21.1px;color:#000">10583163</div>
<div class="t" style="left:1347.7px;top:1200.22px;font-size:21.1px;color:#000">21.89</div>
<div class="t" style="left:1549.7px;top:1200.22px;font-size:21.1px;color:#000">706</div>
<div class="t" style="left:1651.7px;top:1200.22px;font-size:21.1px;color:#000">706</div>
<div class="t" style="left:1753.7px;top:1200.22px;font-size:21.1px;color:#000">706</div>
<div class="t" style="left:1855.7px;top:1200.22px;font-size:21.1px;color:#000">26</div>
<div class="t" style="left:1957.7px;top:1200.22px;font-size:21.1px;color:#000">56</div>
<div class="t" style="left:2059.7px;top:1200.22px;font-size:21.1px;color:#000">32</div>
<div class="t" style="left:410.0px;top:1259.72px;font-size:21.1px;color:#0000ee;text-decoration:underline">Dach1</div>
<svg class="abs" style="left:541px;top:1255.5px" width="34" height="30" viewBox="0 0 34 30"><ellipse cx="17.5" cy="24.5" rx="13.5" ry="1.4" fill="rgba(0,0,0,0.3)" filter="url(#bl)"/><g transform="rotate(-42 17 14)"><rect x="2.6" y="9.8" width="15.8" height="8.4" rx="4.2" fill="none" stroke="url(#lg1)" stroke-width="3.7"/><rect x="15.6" y="9.8" width="15.8" height="8.4" rx="4.2" fill="none" stroke="url(#lg2)" stroke-width="3.7"/></g></svg>
<div class="t" style="left:653.3px;top:1259.35px;font-size:21.1px;line-height:24.3px;color:#000">dachshund 1 (Drosophila)</div>
<div class="t" style="left:1194.7px;top:1259.72px;font-size:21.1px;color:#000">10421950</div>
<div class="t" style="left:1347.7px;top:1259.72px;font-size:21.1px;color:#000">21.3</div>
<div class="t" style="left:1549.7px;top:1259.72px;font-size:21.1px;color:#000">596</div>
<div class="t" style="left:1651.7px;top:1259.72px;font-size:21.1px;color:#000">596</div>
<div class="t" style="left:1753.7px;top:1259.72px;font-size:21.1px;color:#000">596</div>
<div class="t" style="left:1855.7px;top:1259.72px;font-size:21.1px;color:#000">23</div>
<div class="t" style="left:1957.7px;top:1259.72px;font-size:21.1px;color:#000">80</div>
<div class="t" style="left:2059.7px;top:1259.72px;font-size:21.1px;color:#000">28</div>
<div class="t" style="left:410.0px;top:1319.22px;font-size:21.1px;color:#0000ee;text-decoration:underline">Slc18a2</div>
<svg class="abs" style="left:541px;top:1315.0px" width="34" height="30" viewBox="0 0 34 30"><ellipse cx="17.5" cy="24.5" rx="13.5" ry="1.4" fill="rgba(0,0,0,0.3)" filter="url(#bl)"/><g transform="rotate(-42 17 14)"><rect x="2.6" y="9.8" width="15.8" height="8.4" rx="4.2" fill="none" stroke="url(#lg1)" stroke-width="3.7"/><rect x="15.6" y="9.8" width="15.8" height="8.4" rx="4.2" fill="none" stroke="url(#lg2)" stroke-width="3.7"/></g></svg>
<div class="t" style="left:653.3px;top:1306.70px;font-size:21.1px;line-height:24.3px;color:#000">solute carrier family 18 (vesicular monoamine)
member 2</div>
<div class="t" style="left:1194.7px;top:1319.22px;font-size:21.1px;color:#000">10464370</div>
<div class="t" style="left:1347.7px;top:1319.22px;font-size:21.1px;color:#000">19.87</div>
<div class="t" style="left:1549.7px;top:1319.22px;font-size:21.1px;color:#000">788</div>
<div class="t" style="left:1651.7px;top:1319.22px;font-size:21.1px;color:#000">788</div>
<div class="t" style="left:1753.7px;top:1319.22px;font-size:21.1px;color:#000">788</div>
<div class="t" style="left:1855.7px;top:1319.22px;font-size:21.1px;color:#000">33</div>
<div class="t" style="left:1957.7px;top:1319.22px;font-size:21.1px;color:#000">68</div>
<div class="t" style="left:2059.7px;top:1319.22px;font-size:21.1px;color:#000">40</div>
<div class="t" style="left:410.0px;top:1385.22px;font-size:21.1px;color:#0000ee;text-decoration:underline">Ptplad2</div>
<svg class="abs" style="left:541px;top:1381.0px" width="34" height="30" viewBox="0 0 34 30"><ellipse cx="17.5" cy="24.5" rx="13.5" ry="1.4" fill="rgba(0,0,0,0.3)" filter="url(#bl)"/><g transform="rotate(-42 17 14)"><rect x="2.6" y="9.8" width="15.8" height="8.4" rx="4.2" fill="none" stroke="url(#lg1)" stroke-width="3.7"/><rect x="15.6" y="9.8" width="15.8" height="8.4" rx="4.2" fill="none" stroke="url(#lg2)" stroke-width="3.7"/></g></svg>
<div class="t" style="left:653.3px;top:1372.70px;font-size:21.1px;line-height:24.3px;color:#000">protein tyrosine phosphatase-like A domain
containing 2</div>
<div class="t" style="left:1194.7px;top:1385.22px;font-size:21.1px;color:#000">10514275</div>
<div class="t" style="left:1347.7px;top:1385.22px;font-size:21.1px;color:#000">18.25</div>
<div class="t" style="left:1549.7px;top:1385.22px;font-size:21.1px;color:#000">447</div>
<div class="t" style="left:1651.7px;top:1385.22px;font-size:21.1px;color:#000">447</div>
<div class="t" style="left:1753.7px;top:1385.22px;font-size:21.1px;color:#000">447</div>
<div class="t" style="left:1855.7px;top:1385.22px;font-size:21.1px;color:#000">18</div>
<div class="t" style="left:1957.7px;top:1385.22px;font-size:21.1px;color:#000">102</div>
<div class="t" style="left:2059.7px;top:1385.22px;font-size:21.1px;color:#000">24</div>
<div class="t" style="left:410.0px;top:1444.72px;font-size:21.1px;color:#0000ee;text-decoration:underline">Mecom</div>
<svg class="abs" style="left:541px;top:1440.5px" width="34" height="30" viewBox="0 0 34 30"><ellipse cx="17.5" cy="24.5" rx="13.5" ry="1.4" fill="rgba(0,0,0,0.3)" filter="url(#bl)"/><g transform="rotate(-42 17 14)"><rect x="2.6" y="9.8" width="15.8" height="8.4" rx="4.2" fill="none" stroke="url(#lg1)" stroke-width="3.7"/><rect x="15.6" y="9.8" width="15.8" height="8.4" rx="4.2" fill="none" stroke="url(#lg2)" stroke-width="3.7"/></g></svg>
<div class="t" style="left:653.3px;top:1444.35px;font-size:21.1px;line-height:24.3px;color:#000">MDS1 and EVI1 complex locus</div>
<div class="t" style="left:1194.7px;top:1444.72px;font-size:21.1px;color:#000">10497590</div>
<div class="t" style="left:1347.7px;top:1444.72px;font-size:21.1px;color:#000">17.49</div>
<div class="t" style="left:1549.7px;top:1444.72px;font-size:21.1px;color:#000">479</div>
<div class="t" style="left:1651.7px;top:1444.72px;font-size:21.1px;color:#000">479</div>
<div class="t" style="left:1753.7px;top:1444.72px;font-size:21.1px;color:#000">479</div>
<div class="t" style="left:1855.7px;top:1444.72px;font-size:21.1px;color:#000">24</div>
<div class="t" style="left:1957.7px;top:1444.72px;font-size:21.1px;color:#000">37</div>
<div class="t" style="left:2059.7px;top:1444.72px;font-size:21.1px;color:#000">27</div>
<div class="t" style="left:410.0px;top:1497.72px;font-size:21.1px;color:#0000ee;text-decoration:underline">Lhcgr</div>
<svg class="abs" style="left:541px;top:1493.5px" width="34" height="30" viewBox="0 0 34 30"><ellipse cx="17.5" cy="24.5" rx="13.5" ry="1.4" fill="rgba(0,0,0,0.3)" filter="url(#bl)"/><g transform="rotate(-42 17 14)"><rect x="2.6" y="9.8" width="15.8" height="8.4" rx="4.2" fill="none" stroke="url(#lg1)" stroke-width="3.7"/><rect x="15.6" y="9.8" width="15.8" height="8.4" rx="4.2" fill="none" stroke="url(#lg2)" stroke-width="3.7"/></g></svg>
<div class="t" style="left:653.3px;top:1497.35px;font-size:21.1px;line-height:24.3px;color:#000">luteinizing hormone/choriogonadotropin receptor</div>
<div class="t" style="left:1194.7px;top:1497.72px;font-size:21.1px;color:#000">10453487</div>
<div class="t" style="left:1347.7px;top:1497.72px;font-size:21.1px;color:#000">14.43</div>
<div class="t" style="left:1549.7px;top:1497.72px;font-size:21.1px;color:#000">210</div>
<div class="t" style="left:1651.7px;top:1497.72px;font-size:21.1px;color:#000">210</div>
<div class="t" style="left:1753.7px;top:1497.72px;font-size:21.1px;color:#000">210</div>
<div class="t" style="left:1855.7px;top:1497.72px;font-size:21.1px;color:#000">12</div>
<div class="t" style="left:1957.7px;top:1497.72px;font-size:21.1px;color:#000">17</div>
<div class="t" style="left:2059.7px;top:1497.72px;font-size:21.1px;color:#000">15</div>
<div class="t" style="left:410.0px;top:1550.72px;font-size:21.1px;color:#0000ee;text-decoration:underline">Rab38</div>
<svg class="abs" style="left:541px;top:1546.5px" width="34" height="30" viewBox="0 0 34 30"><ellipse cx="17.5" cy="24.5" rx="13.5" ry="1.4" fill="rgba(0,0,0,0.3)" filter="url(#bl)"/><g transform="rotate(-42 17 14)"><rect x="2.6" y="9.8" width="15.8" height="8.4" rx="4.2" fill="none" stroke="url(#lg1)" stroke-width="3.7"/><rect x="15.6" y="9.8" width="15.8" height="8.4" rx="4.2" fill="none" stroke="url(#lg2)" stroke-width="3.7"/></g></svg>
<div class="t" style="left:653.3px;top:1550.35px;font-size:21.1px;line-height:24.3px;color:#000">RAB38 member of RAS oncogene family</div>
<div class="t" style="left:1194.7px;top:1550.72px;font-size:21.1px;color:#000">10554800</div>
<div class="t" style="left:1347.7px;top:1550.72px;font-size:21.1px;color:#000">14.02</div>
<div class="t" style="left:1549.7px;top:1550.72px;font-size:21.1px;color:#000">493</div>
<div class="t" style="left:1651.7px;top:1550.72px;font-size:21.1px;color:#000">493</div>
<div class="t" style="left:1753.7px;top:1550.72px;font-size:21.1px;color:#000">493</div>
<div class="t" style="left:1855.7px;top:1550.72px;font-size:21.1px;color:#000">26</div>
<div class="t" style="left:1957.7px;top:1550.72px;font-size:21.1px;color:#000">89</div>
<div class="t" style="left:2059.7px;top:1550.72px;font-size:21.1px;color:#000">35</div>
<div class="t" style="left:410.0px;top:1603.72px;font-size:21.1px;color:#0000ee;text-decoration:underline">Aldh1a1</div>
<svg class="abs" style="left:541px;top:1599.5px" width="34" height="30" viewBox="0 0 34 30"><ellipse cx="17.5" cy="24.5" rx="13.5" ry="1.4" fill="rgba(0,0,0,0.3)" filter="url(#bl)"/><g transform="rotate(-42 17 14)"><rect x="2.6" y="9.8" width="15.8" height="8.4" rx="4.2" fill="none" stroke="url(#lg1)" stroke-width="3.7"/><rect x="15.6" y="9.8" width="15.8" height="8.4" rx="4.2" fill="none" stroke="url(#lg2)" stroke-width="3.7"/></g></svg>
<div class="t" style="left:653.3px;top:1603.35px;font-size:21.1px;line-height:24.3px;color:#000">aldehyde dehydrogenase family 1 subfamily A1</div>
<div class="t" style="left:1194.7px;top:1603.72px;font-size:21.1px;color:#000">10461979</div>
<div class="t" style="left:1347.7px;top:1603.72px;font-size:21.1px;color:#000">11.85</div>
<div class="t" style="left:1549.7px;top:1603.72px;font-size:21.1px;color:#000">499</div>
<div class="t" style="left:1651.7px;top:1603.72px;font-size:21.1px;color:#000">499</div>
<div class="t" style="left:1753.7px;top:1603.72px;font-size:21.1px;color:#000">499</div>
<div class="t" style="left:1855.7px;top:1603.72px;font-size:21.1px;color:#000">33</div>
<div class="t" style="left:1957.7px;top:1603.72px;font-size:21.1px;color:#000">50</div>
<div class="t" style="left:2059.7px;top:1603.72px;font-size:21.1px;color:#000">42</div>
<div class="t" style="left:410.0px;top:1663.22px;font-size:21.1px;color:#0000ee;text-decoration:underline">Tie1</div>
<svg class="abs" style="left:541px;top:1659.0px" width="34" height="30" viewBox="0 0 34 30"><ellipse cx="17.5" cy="24.5" rx="13.5" ry="1.4" fill="rgba(0,0,0,0.3)" filter="url(#bl)"/><g transform="rotate(-42 17 14)"><rect x="2.6" y="9.8" width="15.8" height="8.4" rx="4.2" fill="none" stroke="url(#lg1)" stroke-width="3.7"/><rect x="15.6" y="9.8" width="15.8" height="8.4" rx="4.2" fill="none" stroke="url(#lg2)" stroke-width="3.7"/></g></svg>
<div class="t" style="left:653.3px;top:1650.70px;font-size:21.1px;line-height:24.3px;color:#000">tyrosine kinase with immunoglobulin-like and EGF-
like domains 1</div>
<div class="t" style="left:1194.7px;top:1663.22px;font-size:21.1px;color:#000">10515771</div>
<div class="t" style="left:1347.7px;top:1663.22px;font-size:21.1px;color:#000">11.42</div>
<div class="t" style="left:1549.7px;top:1663.22px;font-size:21.1px;color:#000">583</div>
<div class="t" style="left:1651.7px;top:1663.22px;font-size:21.1px;color:#000">583</div>
<div class="t" style="left:1753.7px;top:1663.22px;font-size:21.1px;color:#000">583</div>
<div class="t" style="left:1855.7px;top:1663.22px;font-size:21.1px;color:#000">41</div>
<div class="t" style="left:1957.7px;top:1663.22px;font-size:21.1px;color:#000">93</div>
<div class="t" style="left:2059.7px;top:1663.22px;font-size:21.1px;color:#000">51</div>
<div class="t" style="left:410.0px;top:1722.72px;font-size:21.1px;color:#0000ee;text-decoration:underline">Nckap1</div>
<svg class="abs" style="left:541px;top:1718.5px" width="34" height="30" viewBox="0 0 34 30"><ellipse cx="17.5" cy="24.5" rx="13.5" ry="1.4" fill="rgba(0,0,0,0.3)" filter="url(#bl)"/><g transform="rotate(-42 17 14)"><rect x="2.6" y="9.8" width="15.8" height="8.4" rx="4.2" fill="none" stroke="url(#lg1)" stroke-width="3.7"/><rect x="15.6" y="9.8" width="15.8" height="8.4" rx="4.2" fill="none" stroke="url(#lg2)" stroke-width="3.7"/></g></svg>
<div class="t" style="left:653.3px;top:1722.35px;font-size:21.1px;line-height:24.3px;color:#000">NCK-associated protein 1</div>
<div class="t" style="left:1194.7px;top:1722.72px;font-size:21.1px;color:#000">10484318</div>
<div class="t" style="left:1347.7px;top:1722.72px;font-size:21.1px;color:#000">11.08</div>
<div class="t" style="left:1549.7px;top:1722.72px;font-size:21.1px;color:#000">416</div>
<div class="t" style="left:1651.7px;top:1722.72px;font-size:21.1px;color:#000">416</div>
<div class="t" style="left:1753.7px;top:1722.72px;font-size:21.1px;color:#000">416</div>
<div class="t" style="left:1855.7px;top:1722.72px;font-size:21.1px;color:#000">31</div>
<div class="t" style="left:1957.7px;top:1722.72px;font-size:21.1px;color:#000">52</div>
<div class="t" style="left:2059.7px;top:1722.72px;font-size:21.1px;color:#000">38</div>
</div>
<div class="abs" style="left:388px;top:987px;width:1790px;height:760px;border:2px solid #777"></div>
<div class="abs" style="left:392px;top:1755px;width:141px;height:47px;border:2px solid #777;border-radius:2px;background:linear-gradient(#ffffff 0%,#fbfbfb 35%,#e8e8e8 70%,#dadadc 90%,#e4e4e4 100%)"></div>
<div class="t" style="left:413.7px;top:1766.18px;font-size:21.9px;">Download</div>
</body></html>
